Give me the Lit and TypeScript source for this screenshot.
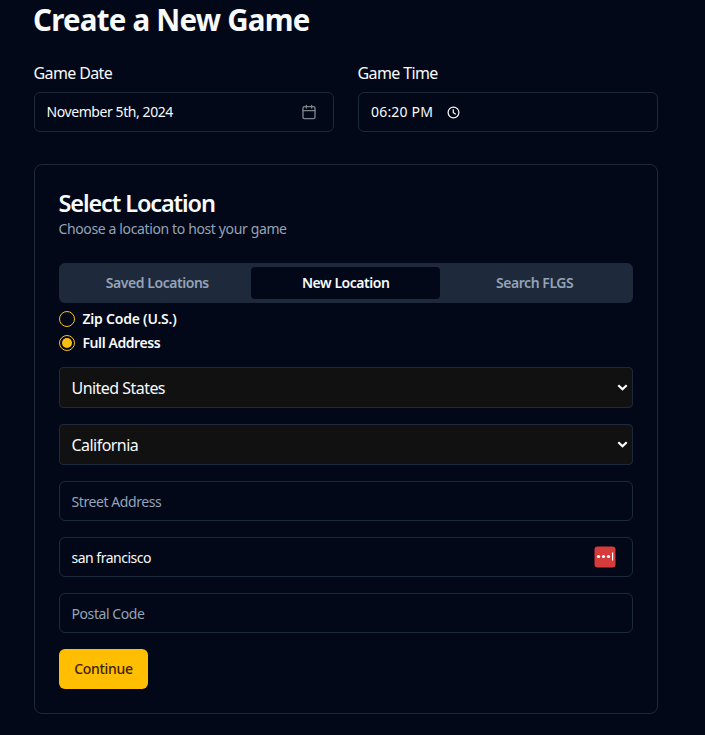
import { LitElement, html, css } from "lit";
import { customElement, state } from "lit/decorators.js";

@customElement("app-root")
export class AppRoot extends LitElement {
  @state() private tab = "New Location";
  @state() private mode = "Full Address";

  static styles = css`
    :host { display: block; height: 735px; box-sizing: border-box; padding: 2px 47px 0 34px; overflow: hidden;
      background: #020817; color: #f8fafc; font: 14px/20px "Noto Sans", "Open Sans", sans-serif; }
    * { box-sizing: border-box; }
    h1 { margin: 0 0 0 -1px; font-size: 29.5px; line-height: 36px; font-weight: 700; letter-spacing: -0.77px; white-space: nowrap; }
    .when { display: grid; grid-template-columns: 1fr 1fr; gap: 24px; margin-top: 23px; }
    .label { margin: 0 0 7px -0.5px; font-size: 16px; line-height: 24px; letter-spacing: -0.62px; }
    .field { display: flex; align-items: center; height: 40px; padding: 2px 12px 0 11.5px; border: 1px solid #1e293b; border-radius: 6px; white-space: nowrap; letter-spacing: -0.42px; }
    .date { justify-content: space-between; padding: 0 16px 0 11.5px; }
    .date svg { opacity: .5; }
    .time { gap: 14px; padding: 0 12px; letter-spacing: 0.18px; }
    .card { margin-top: 32px; height: 550px; padding: 24px; border: 1px solid #1e293b; border-radius: 8px; }
    h2 { margin: 2px 0 0 -0.5px; font-size: 23.5px; line-height: 24px; font-weight: 600; letter-spacing: -1.12px; }
    .hint { margin: 4px 0 0 -0.5px; color: #94a3b8; letter-spacing: -0.37px; }
    .tabs { display: grid; grid-template-columns: repeat(3, 1fr); margin-top: 24px; height: 40px; padding: 4px; border-radius: 6px; background: #1e293b; }
    button { font: inherit; border: 0; padding: 0; cursor: pointer; }
    .tab { background: transparent; color: #94a3b8; font-weight: 600; border-radius: 4px; letter-spacing: -0.45px; }
    .tab.on { margin-left: -0.5px; background: #020817; color: #f8fafc; }
    .radios { display: grid; gap: 8px; padding: 8px 0 16px; }
    .option { display: flex; align-items: center; gap: 7.5px; height: 16px; font-weight: 600; letter-spacing: -0.42px; }
    .option.zip { letter-spacing: -0.22px; }
    .dot { display: grid; place-items: center; width: 16px; height: 16px; border: 1px solid #fbbf14; border-radius: 50%; }
    .dot.on::before { content: ""; width: 10px; height: 10px; border-radius: 50%; background: #fbbf14; }
    .form { display: grid; gap: 16px; justify-items: stretch; }
    .select { display: flex; align-items: center; justify-content: space-between; height: 41px; padding: 1px 4px 0 11.5px; font-size: 16px; background: #111; border: 1px solid #1e293b; border-radius: 4px; letter-spacing: -0.54px; }
    .empty { color: #94a3b8; }
    .city { justify-content: space-between; padding-right: 16px; letter-spacing: -0.5px; }
    .city svg { margin-top: -2px; }
    .go { justify-self: start; width: 89px; height: 40px; border-radius: 6px; background: #ffbf00; color: #422006; font-weight: 500; letter-spacing: -0.3px; }
    svg { display: block; flex: none; }
  `;

  private select(value: string) {
    return html`<div class="select"><span>${value}</span>
      <svg width="11" height="8" viewBox="0 0 11 8" fill="none" stroke="#fff" stroke-width="2.2"><path d="M1.3 1.2 5.5 5.3 9.7 1.2" /></svg></div>`;
  }

  render() {
    return html`
      <h1>Create a New Game</h1>
      <div class="when">
        <div>
          <div class="label">Game Date</div>
          <div class="field date"><span>November 5th, 2024</span>
            <svg width="16" height="16" viewBox="0 0 24 24" fill="none" stroke="#f8fafc" stroke-width="2" stroke-linecap="round" stroke-linejoin="round"><path d="M8 2v4M16 2v4M3 10h18" /><rect x="3" y="4" width="18" height="18" rx="2" /></svg>
          </div>
        </div>
        <div>
          <div class="label">Game Time</div>
          <div class="field time"><span>06:20 PM</span>
            <svg width="13" height="13" viewBox="0 0 13 13" fill="none" stroke="#fff" stroke-width="1.2"><circle cx="6.5" cy="6.5" r="5.4" /><path d="M6.3 3.2v3.5l2.5 1.6" /></svg>
          </div>
        </div>
      </div>
      <section class="card">
        <h2>Select Location</h2>
        <div class="hint">Choose a location to host your game</div>
        <div class="tabs">
          ${["Saved Locations", "New Location", "Search FLGS"].map(
            (t) => html`<button class="tab ${t === this.tab ? "on" : ""}" @click=${() => (this.tab = t)}>${t}</button>`
          )}
        </div>
        <div class="radios">
          ${["Zip Code (U.S.)", "Full Address"].map(
            (m, i) => html`<div class="option ${i === 0 ? "zip" : ""}" @click=${() => (this.mode = m)}><span class="dot ${m === this.mode ? "on" : ""}"></span><span>${m}</span></div>`
          )}
        </div>
        <div class="form">
          ${this.select("United States")} ${this.select("California")}
          <div class="field empty">Street Address</div>
          <div class="field city"><span>san francisco</span>
            <svg width="22" height="22" viewBox="0 0 22 22"><rect x=".5" y=".5" width="21" height="21" rx="3" fill="#d63b3b" /><g fill="#fff"><circle cx="4.5" cy="10.5" r="1.6" /><circle cx="9.5" cy="10.5" r="1.6" /><circle cx="14.5" cy="10.5" r="1.6" /><rect x="18" y="6.5" width="1.2" height="8" /></g></svg>
          </div>
          <div class="field empty">Postal Code</div>
          <button class="go">Continue</button>
        </div>
      </section>
    `;
  }
}
